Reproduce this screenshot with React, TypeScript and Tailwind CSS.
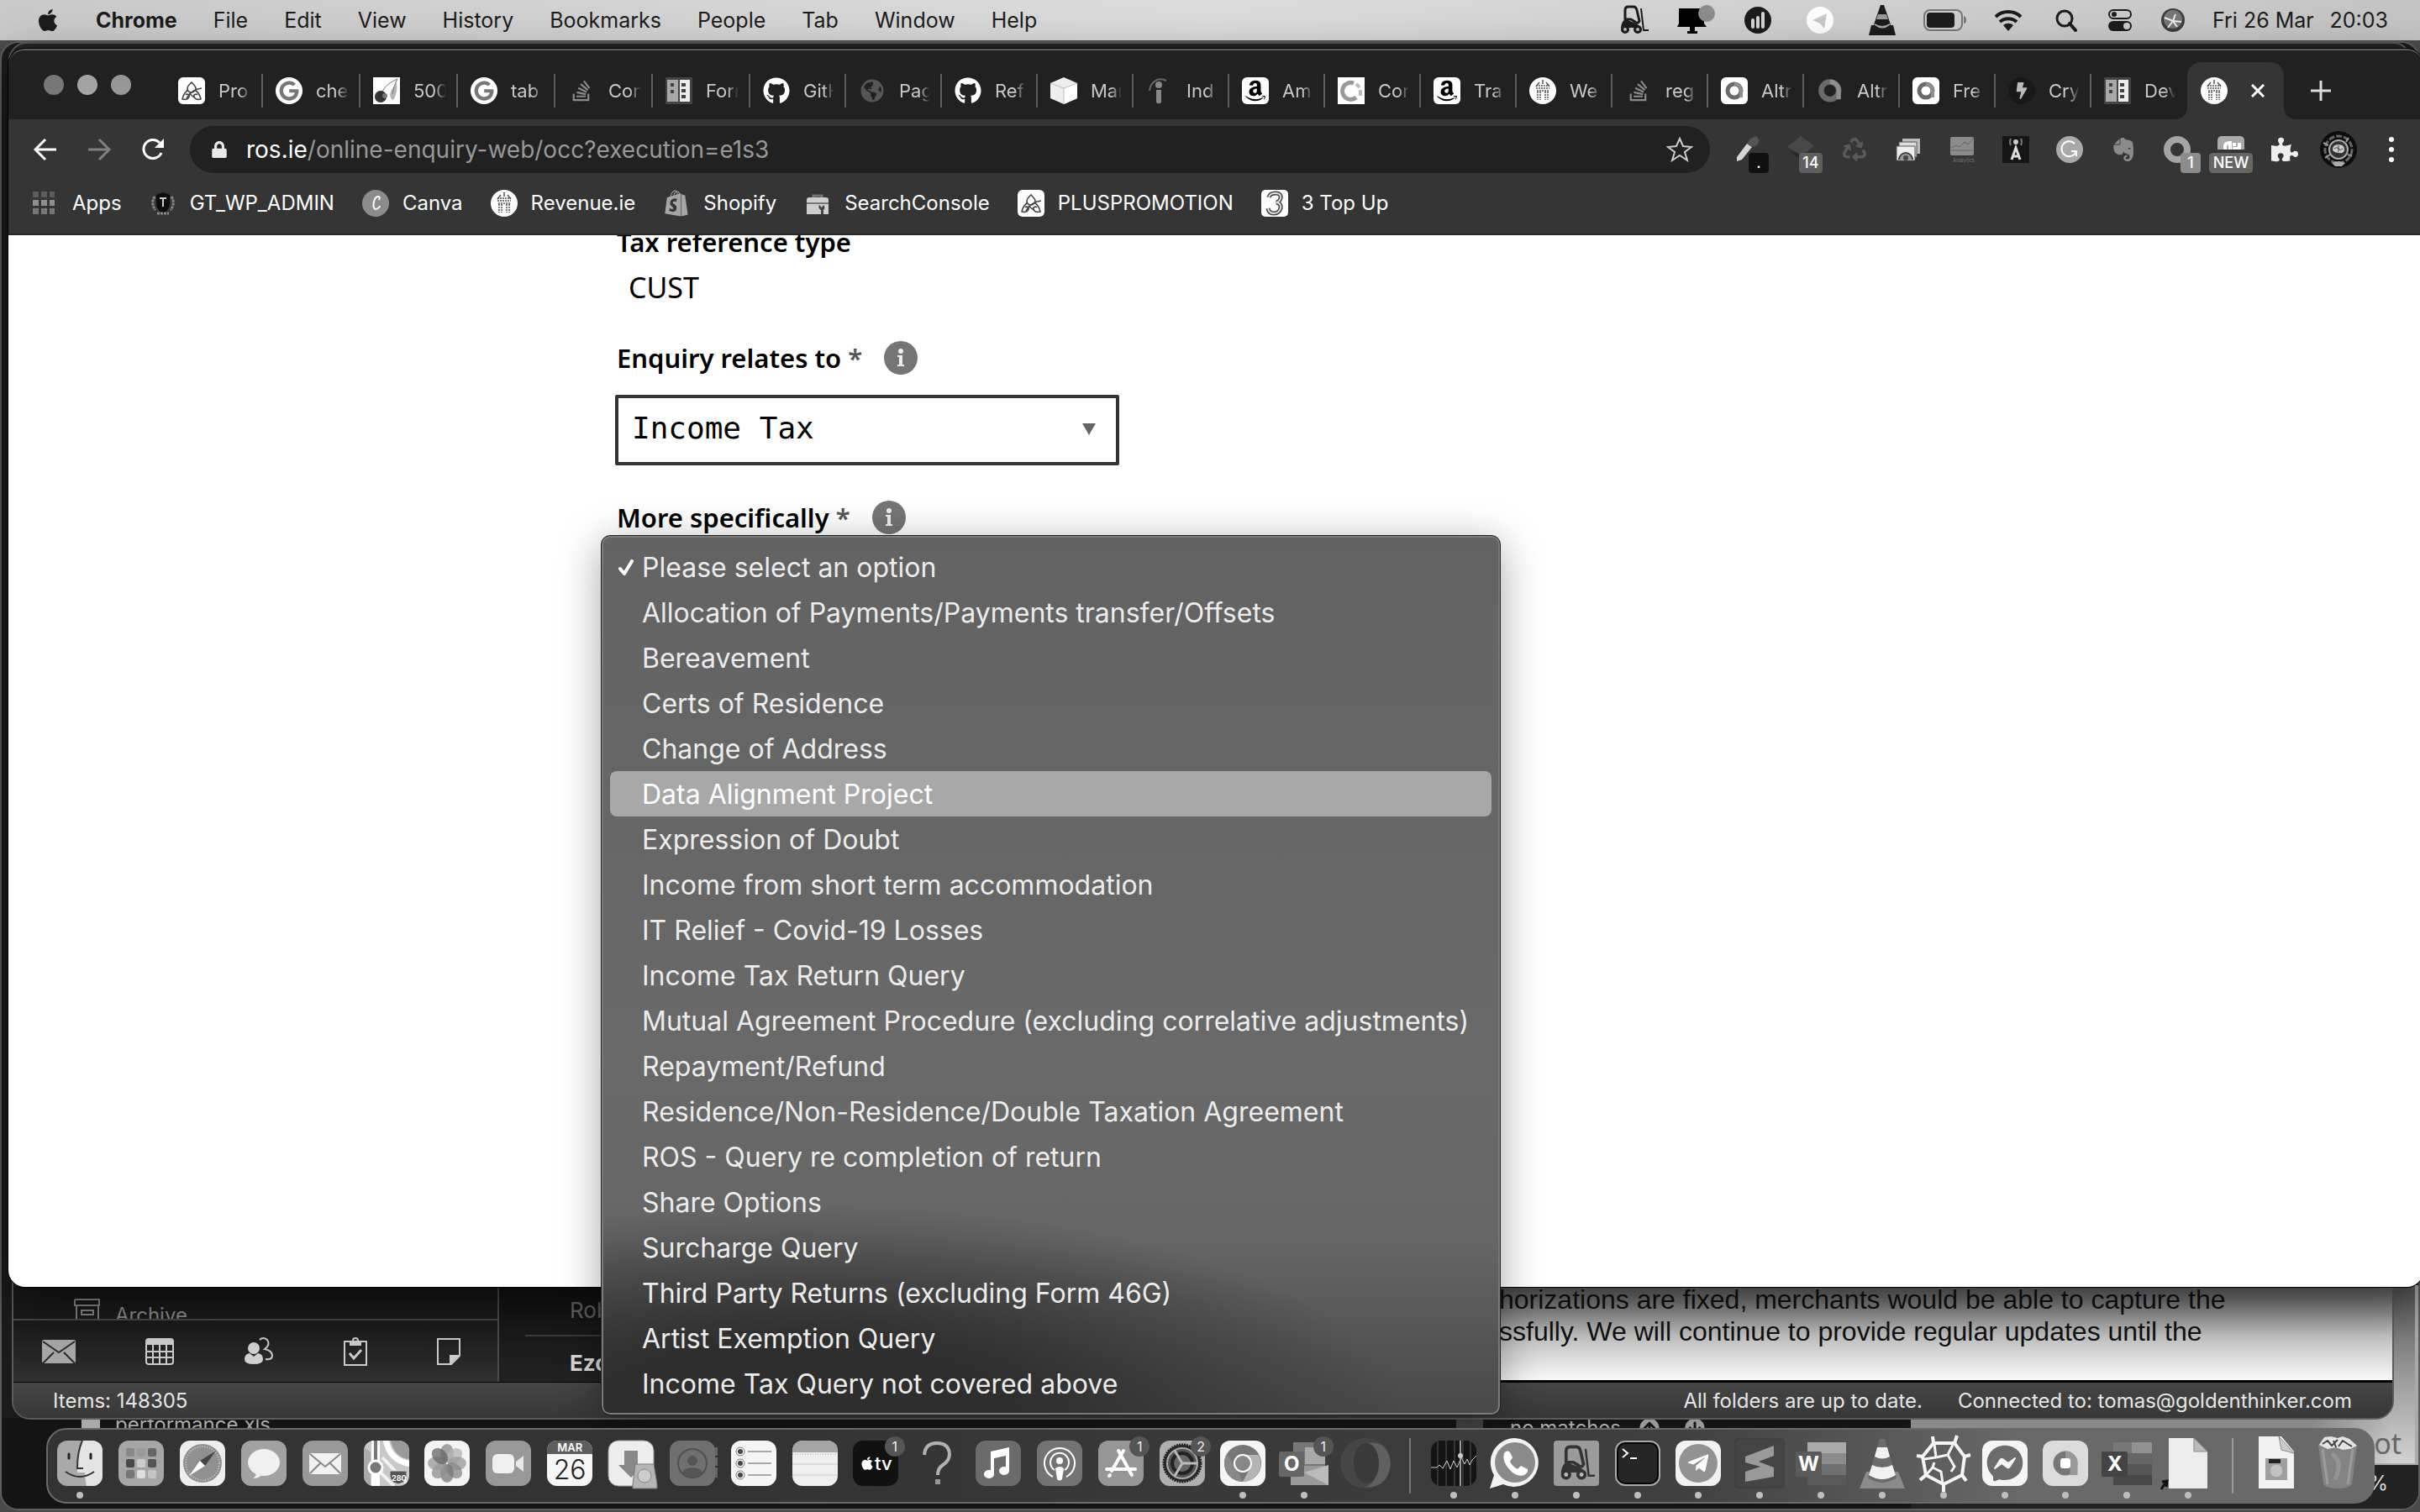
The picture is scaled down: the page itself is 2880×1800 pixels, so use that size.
import React from "react";
import {
  FaAmazon,
  FaApple,
  FaBolt,
  FaEvernote,
  FaFacebookMessenger,
  FaGithub,
  FaGoogle,
  FaPuzzlePiece,
  FaRecycle,
  FaShopify,
  FaStackOverflow,
  FaTelegramPlane,
  FaGlobeAmericas,
  FaLock,
  FaArrowCircleUp,
  FaArrowCircleDown,
} from "react-icons/fa";

type Node = React.ReactNode;

/* ---------- small shared drawings ---------- */

function Svg({ box = "0 0 32 32", className = "size-8", children }: { box?: string; className?: string; children: Node }) {
  return (
    <svg viewBox={box} className={className} fill="none" aria-hidden="true">
      {children}
    </svg>
  );
}

function PlusPromo() {
  return (
    <Svg>
      <rect width="32" height="32" rx="6" fill="#fff" />
      <g stroke="#444" strokeWidth="1.6">
        <path d="M16 6c3 3 5 5 5 7s-2 5-5 5-5-2-5-5 2-4 5-7Z" />
        <path d="M12 15c-3 2-6 6-7 11 4 1 7 0 8-3 1-2-2-4-4-2M20 15c3 2 6 6 7 11-4 1-7 0-8-3-1-2 2-4 4-2" />
        <path d="M10 25c4-7 9-11 18-12M13 19l6 5" />
      </g>
    </Svg>
  );
}

function GoogleIcon() {
  return (
    <span className="flex size-8 items-center justify-center rounded-full bg-white">
      <FaGoogle className="size-6 text-[#777]" />
    </span>
  );
}

function Cherry() {
  return (
    <Svg>
      <rect width="32" height="32" fill="#fff" />
      <path d="M28 6c1 8 0 15-4 21-4-1-5-6-2-12Z" fill="#b5b5b5" />
      <path d="M29 2C22 5 13 10 10 20M29 2c-3 5-5 12-6 18" stroke="#777" />
      <circle cx="9" cy="23" r="7" fill="#333" />
      <circle cx="14" cy="22" r="3" fill="#777" />
    </Svg>
  );
}

function Columns() {
  return (
    <Svg>
      <rect width="32" height="32" fill="#444" />
      <path d="M2 3h13v26H2z" fill="#a8a8a8" />
      <path d="M17 3h12v26H17z" fill="#eee" />
      <path d="M6 7h4v4H6zM6 15h4v4H6zM19 7h5v4h-5zM19 14h5v4h-5zM19 21h5v4h-5z" fill="#444" />
    </Svg>
  );
}

function Cube() {
  return (
    <Svg>
      <path d="M16 0 32 7v18l-16 7L0 25V7Z" fill="#eee" />
      <path d="M16 13 32 7v18l-16 7Z" fill="#fff" />
      <path d="M0 7l16 6 16-6M16 13v19" stroke="#bbb" />
    </Svg>
  );
}

function Indeed() {
  return (
    <Svg>
      <path d="M4 16C5 6 14 -1 24 4" stroke="#666" strokeWidth="2" />
      <circle cx="15" cy="9" r="4" fill="#888" />
      <path d="M12 15h6v14c0 3-6 3-6 0Z" fill="#888" />
    </Svg>
  );
}

function Amazon() {
  return (
    <span className="flex size-8 items-center justify-center rounded-md bg-white">
      <FaAmazon className="size-7 text-black" />
    </span>
  );
}

function RingC() {
  return (
    <Svg>
      <rect width="32" height="32" fill="#fff" />
      <path d="M19 7a10 10 0 1 0 3 17" stroke="#999" strokeWidth="5" />
      <path d="M22 8l4 4M27 15v7" stroke="#bbb" strokeWidth="4" />
    </Svg>
  );
}

function Revenue() {
  return (
    <Svg>
      <circle cx="16" cy="16" r="16" fill="#fff" />
      <g stroke="#555" strokeWidth="1.5">
        <path d="M16 3v5M12 6l-4 5M20 6l4 5" />
        <path d="M8 10h16M8 13h16M9 16h14" strokeDasharray="2 1" />
        <path d="M10 17v10M13 17v10M19 17v10M22 17v10" strokeDasharray="2 1" />
      </g>
    </Svg>
  );
}

function AltRing({ plain }: { plain?: boolean }) {
  return (
    <Svg>
      {!plain && <rect width="32" height="32" rx="6" fill="#fff" />}
      <g transform={plain ? "translate(-5 -5) scale(1.3)" : undefined}>
        <circle cx="16" cy="16" r="8" stroke="#6a6a6a" strokeWidth="5" />
        <path d="M16 8a8 8 0 0 1 8 8v8" stroke="#8e8e8e" strokeWidth="4" />
        <rect x="12" y="12" width="8" height="8" rx="2" fill={plain ? "#212121" : "#fff"} />
      </g>
    </Svg>
  );
}

function StackIcon() {
  return <FaStackOverflow className="size-7 text-[#8a8a8a]" />;
}
function GitIcon() {
  return <FaGithub className="size-8 text-white" />;
}

/* ---------- menu bar ---------- */

const menus = ["File", "Edit", "View", "History", "Bookmarks", "People", "Tab", "Window", "Help"];

function Forklift({ className = "size-9", color = "#1c1c1c" }: { className?: string; color?: string }) {
  return (
    <Svg box="0 0 36 36" className={className}>
      <path d="M8 17V6q0-4 4-4h6q3 0 4 4l3 13q-2 4-5 1l-5-3Z" stroke={color} strokeWidth="3" strokeLinejoin="round" />
      <path d="M27 4l3 26h6" stroke={color} strokeWidth="2" />
      <path d="M3 27q1-9 6-10l7 3q8 2 10 7Z" fill={color} />
      <circle cx="8" cy="29" r="5" fill={color} />
      <circle cx="23" cy="29" r="5" fill={color} />
      <circle cx="8" cy="29" r="2" fill="#bbb" />
      <circle cx="23" cy="29" r="2" fill="#bbb" />
    </Svg>
  );
}

function MenuBar() {
  return (
    <header className="flex h-12 shrink-0 items-center bg-linear-to-r from-[#c9c9c9] via-[#dcdcdc] to-[#c4c4c4] pr-[38px] pl-[42px] text-[25px] leading-12 text-[#1c1c1c]">
      <button aria-label="Apple menu" className="mr-[42px]">
        <FaApple className="size-[30px]" />
      </button>
      <nav className="flex gap-[43px]">
        <button className="font-bold">Chrome</button>
        {menus.map((m) => (
          <button key={m}>{m}</button>
        ))}
      </nav>
      <div className="ml-auto flex items-center">
        <span className="flex w-[74px] justify-center">
          <Forklift />
        </span>
        <span className="flex w-[74px] justify-center">
          <Svg box="0 0 46 36" className="h-9 w-[46px]">
            <path d="M3 4h26q3 0 4 3v15l3 4H1l2-4Z" fill="#000" />
            <path d="M16 26h6v5h3v3H13v-3h3z" fill="#000" />
            <circle cx="36" cy="10" r="10" fill="#8d8d8d" />
          </Svg>
        </span>
        <span className="flex w-[74px] justify-center">
          <Svg>
            <circle cx="16" cy="16" r="16" fill="#1c1c1c" />
            <path d="M10 16v8M16 13v11M22 8v16" stroke="#d5d5d5" strokeWidth="4" strokeLinecap="round" />
          </Svg>
        </span>
        <span className="flex w-[74px] justify-center">
          <Svg>
            <circle cx="16" cy="16" r="16" fill="#fff" />
            <path d="M7 16 24 8l-3 18-5-6Z" fill="#c9c9c9" />
          </Svg>
        </span>
        <span className="flex w-[74px] justify-center">
          <Svg box="0 0 32 38" className="h-[38px] w-8">
            <path d="M14 1h4l9 26H5Z" fill="#1c1c1c" />
            <path d="M11 12h10l2 6H9Z" fill="#999" />
            <path d="M7 23q9 6 18 0l1 3q-10 6-20 0Z" fill="#aaa" />
            <path d="M3 25h4q9 7 18 0h4l3 12H0Z" fill="#1c1c1c" />
          </Svg>
        </span>
        <span className="flex w-[76px] justify-center">
          <Svg box="0 0 52 26" className="h-[26px] w-[52px]">
            <rect x="1" y="1" width="45" height="24" rx="7" stroke="#777" strokeWidth="2" />
            <rect x="4" y="4" width="33" height="18" rx="4" fill="#1c1c1c" />
            <path d="M48 8q3 1 3 5t-3 4Z" fill="#777" />
          </Svg>
        </span>
        <span className="flex w-[74px] justify-center">
          <Svg box="0 0 34 26" className="h-[26px] w-[34px]">
            <path d="M2 9a22 22 0 0 1 30 0M7 15a15 15 0 0 1 20 0" stroke="#1c1c1c" strokeWidth="4" />
            <path d="M11 19a9 9 0 0 1 12 0l-6 7Z" fill="#1c1c1c" />
          </Svg>
        </span>
        <span className="flex w-16 justify-center">
          <Svg box="0 0 28 28" className="size-7">
            <circle cx="12" cy="12" r="9" stroke="#1c1c1c" strokeWidth="3" />
            <path d="M18 18l7 8" stroke="#1c1c1c" strokeWidth="4" strokeLinecap="round" />
          </Svg>
        </span>
        <span className="flex w-16 justify-center">
          <Svg box="0 0 28 28" className="size-7">
            <rect x="1" y="2" width="26" height="10" rx="5" stroke="#1c1c1c" strokeWidth="2" />
            <circle cx="7" cy="7" r="3" fill="#1c1c1c" />
            <rect y="15" width="28" height="12" rx="6" fill="#1c1c1c" />
            <circle cx="22" cy="21" r="4" fill="#ccc" />
          </Svg>
        </span>
        <span className="mr-4 flex w-[62px] justify-center">
          <Svg box="0 0 28 28" className="size-7">
            <circle cx="14" cy="14" r="14" fill="#3d3d3d" />
            <circle cx="14" cy="13" r="11" fill="#777" />
            <path d="M4 11l10 4 3-8M14 15l10 1M14 15l-6 8M14 15l5 7" stroke="#eee" strokeWidth="2" />
          </Svg>
        </span>
        <button className="flex w-[209px] justify-between">
          <span>Fri 26 Mar</span>
          <span>20:03</span>
        </button>
      </div>
    </header>
  );
}

/* ---------- browser ---------- */

const tabs: { title: string; icon: Node; wide?: boolean }[] = [
  { title: "Pro", icon: <PlusPromo />, wide: true },
  { title: "che", icon: <GoogleIcon />, wide: true },
  { title: "500", icon: <Cherry />, wide: true },
  { title: "tab", icon: <GoogleIcon />, wide: true },
  { title: "Con", icon: <StackIcon />, wide: true },
  { title: "Forn", icon: <Columns />, wide: true },
  { title: "GitH", icon: <GitIcon /> },
  { title: "Pag", icon: <FaGlobeAmericas className="size-7 text-[#555]" /> },
  { title: "Ref", icon: <GitIcon /> },
  { title: "Mar", icon: <Cube /> },
  { title: "Ind", icon: <Indeed /> },
  { title: "Am", icon: <Amazon /> },
  { title: "Cor", icon: <RingC /> },
  { title: "Tra", icon: <Amazon /> },
  { title: "We", icon: <Revenue /> },
  { title: "reg", icon: <StackIcon /> },
  { title: "Altr", icon: <AltRing /> },
  { title: "Altr", icon: <AltRing plain /> },
  { title: "Fre", icon: <AltRing /> },
  {
    title: "Cry",
    icon: (
      <span className="flex size-8 items-center justify-center rounded-full bg-[#191919]">
        <FaBolt className="size-5 text-[#bbb]" />
      </span>
    ),
  },
  { title: "Dev", icon: <Columns /> },
];

function TabStrip() {
  return (
    <div className="flex h-[82px] shrink-0 items-end bg-[#212121]">
      <div className="flex w-[187px] shrink-0 gap-4 self-center pl-[42px]">
        <button aria-label="Close window" className="size-6 rounded-full bg-[#777]" />
        <button aria-label="Minimise window" className="size-6 rounded-full bg-[#a3a3a3]" />
        <button aria-label="Zoom window" className="size-6 rounded-full bg-[#979797]" />
      </div>
      {tabs.map((t, i) => (
        <button key={i} className={`flex h-[68px] shrink-0 items-center ${t.wide ? "w-[116px]" : "w-[114px]"}`}>
          <span className="ml-[15px] flex size-8 shrink-0 items-center justify-center">{t.icon}</span>
          <span className="ml-4 flex-1 overflow-hidden text-left text-[22px] text-[#c8c8c8] [mask-image:linear-gradient(to_right,black_65%,transparent)]">
            {t.title}
          </span>
          <span className={`ml-3 h-10 w-0.5 ${i === tabs.length - 1 ? "" : "bg-[#5c5c5c]"}`} />
        </button>
      ))}
      <div className="relative flex h-[68px] w-[115px] shrink-0 items-center rounded-t-2xl bg-[#353535]">
        <svg viewBox="0 0 16 16" className="absolute bottom-0 -left-4 size-4" aria-hidden="true">
          <path d="M16 0v16H0Q16 16 16 0Z" fill="#353535" />
        </svg>
        <svg viewBox="0 0 16 16" className="absolute -right-4 bottom-0 size-4" aria-hidden="true">
          <path d="M0 0v16h16Q0 16 0 0Z" fill="#353535" />
        </svg>
        <span className="ml-4">
          <Revenue />
        </span>
        <button aria-label="Close tab" className="ml-7">
          <Svg box="0 0 16 16" className="size-4">
            <path d="M1 1l14 14M15 1 1 15" stroke="#fff" strokeWidth="3" />
          </Svg>
        </button>
      </div>
      <button aria-label="New tab" className="flex h-[68px] items-center pl-8">
        <Svg box="0 0 24 24" className="size-6">
          <path d="M12 0v24M0 12h24" stroke="#ddd" strokeWidth="3" />
        </Svg>
      </button>
    </div>
  );
}

function Badge({ children, className }: { children: Node; className: string }) {
  return (
    <span className={`absolute top-8 flex h-6 items-center justify-center rounded text-lg font-medium text-white ${className}`}>
      {children}
    </span>
  );
}

const extensions: Node[] = [
  <>
    <Svg>
      <path d="M4 25 16 9l6 4L10 28l-6 2Z" fill="#d5d5d5" />
      <path d="M16 9l4-6 7-3 4 5-3 6-6 2Z" fill="#555" />
    </Svg>
    <Badge className="left-[34px] w-6 bg-[#111]">.</Badge>
  </>,
  <>
    <Svg>
      <path d="M16 0 32 12 18 23 0 13Z" fill="#484848" />
      <path d="M2 17l16 12v-6Z" fill="#262626" />
    </Svg>
    <Badge className="left-[30px] w-7 bg-[#5f5f5f]">14</Badge>
  </>,
  <FaRecycle className="size-7 text-[#595959]" />,
  <Svg>
    <path d="M9 3h21v18H9z" fill="#bbb" />
    <path d="M5 7h21v18H5z" fill="#ddd" stroke="#555" />
    <path d="M2 12h22v17H2z" fill="#eee" stroke="#555" />
    <path d="M5 28a8 8 0 0 1 16 0" fill="#999" stroke="#444" strokeWidth="2" />
    <circle cx="13" cy="26" r="3" fill="#444" />
  </Svg>,
  <Svg>
    <rect x="2" y="1" width="28" height="22" rx="2" fill="#8b8b8b" />
    <path d="M3 14l6-3 4 2 6-6 4 3 6-7M3 17h26" stroke="#666" />
    <text x="5" y="31" fontSize="6" fill="#777">
      Analytics
    </text>
  </Svg>,
  <Svg>
    <rect width="32" height="32" fill="#161616" />
    <path d="M11 28l5-14 5 14M13 24h6" stroke="#ddd" strokeWidth="3" />
    <circle cx="16" cy="7" r="3" fill="#ccc" />
    <path d="M10 3q-2 4 0 8M22 3q2 4 0 8" stroke="#777" strokeWidth="2" />
  </Svg>,
  <Svg>
    <circle cx="16" cy="16" r="16" fill="#a9a9a9" />
    <path d="M22 9a9 9 0 1 0 2 9h-6M24 18v6" stroke="#fff" strokeWidth="2" />
  </Svg>,
  <FaEvernote className="size-8 text-[#8a8a8a]" />,
  <>
    <Svg>
      <circle cx="16" cy="16" r="12" stroke="#a5a5a5" strokeWidth="8" />
    </Svg>
    <Badge className="left-9 w-6 bg-[#8c8c8c]">1</Badge>
  </>,
  <>
    <Svg>
      <rect width="32" height="32" rx="5" fill="#aaa" />
      <path d="M9 18v-6q0-4 6-4v10M20 8v4M20 18v-3h6V8" stroke="#fff" strokeWidth="4" />
    </Svg>
    <Badge className="left-[6px] w-[52px] bg-[#666] outline-4 outline-[#353535]">NEW</Badge>
  </>,
  <FaPuzzlePiece className="size-8 text-[#eee]" />,
];

function Toolbar() {
  return (
    <div className="flex h-[72px] shrink-0 items-center bg-[#353535] pr-[31px] pl-7">
      <button aria-label="Back" className="mr-8 p-0.5">
        <Svg box="0 0 28 28" className="size-7">
          <path d="M27 14H3M14 2 2 14l12 12" stroke="#fff" strokeWidth="3" />
        </Svg>
      </button>
      <button aria-label="Forward" className="mr-8 p-0.5">
        <Svg box="0 0 28 28" className="size-7">
          <path d="M1 14h24M14 2l12 12-12 12" stroke="#808080" strokeWidth="3" />
        </Svg>
      </button>
      <button aria-label="Reload" className="mr-7 p-0.5">
        <Svg box="0 0 28 28" className="size-7">
          <path d="M24 18a11 11 0 1 1-2-12" stroke="#fff" strokeWidth="3" />
          <path d="M27 1v11H16Z" fill="#fff" />
        </Svg>
      </button>
      <div className="flex h-14 flex-1 items-center rounded-full bg-[#212121] pr-5 pl-[25px] text-[28px]">
        <FaLock className="size-5 text-[#e8e8e8]" />
        <button className="ml-[22px] flex-1 text-left text-[#989898]">
          <span className="text-white">ros.ie</span>/online-enquiry-web/occ?execution=e1s3
        </button>
        <button aria-label="Bookmark this page">
          <Svg>
            <path d="m16 3 4 9 10 1-8 6 3 10-9-6-9 6 3-10-8-6 10-1Z" stroke="#ccc" strokeWidth="2" />
          </Svg>
        </button>
      </div>
      <div className="ml-3 flex">
        {extensions.map((e, i) => (
          <button key={i} aria-label={`Extension ${i + 1}`} className="relative flex h-14 w-16 items-center justify-center">
            {e}
          </button>
        ))}
      </div>
      <button aria-label="Profile" className="ml-[10px]">
        <Svg box="0 0 44 44" className="size-11">
          <circle cx="22" cy="22" r="22" fill="#0d0d0d" />
          <circle cx="22" cy="22" r="16" stroke="#666" strokeWidth="3" strokeDasharray="7 2" />
          <circle cx="22" cy="22" r="11" fill="#333" stroke="#aaa" strokeWidth="2" />
          <path d="M15 22q0-6 7-6t7 6q0 5-7 4t-7-4" fill="#ccc" />
          <path d="M17 21q3-3 5 0t5 0M22 17v8" stroke="#444" />
          <path d="M4 14l6 3M34 8l-3 5M6 32l6-4M38 30l-5-2" stroke="#999" strokeWidth="2" />
          <path d="M14 38q8-4 16 0l-4 4h-8Z" fill="#aaa" />
        </Svg>
      </button>
      <button aria-label="Menu" className="ml-[34px] flex flex-col items-center gap-[6px] px-1">
        <span className="size-1.5 rounded-full bg-white" />
        <span className="size-1.5 rounded-full bg-white" />
        <span className="size-1.5 rounded-full bg-white" />
      </button>
    </div>
  );
}

const bookmarks: { label: string; icon: Node }[] = [
  {
    label: "GT_WP_ADMIN",
    icon: (
      <Svg>
        <path d="M16 3l8 3v10q0 8-8 12-8-4-8-12V6Z" fill="#0c0c0c" />
        <path d="M6 8q-5 8 1 16M26 8q5 8-1 16M9 28h14" stroke="#8a8a8a" strokeWidth="3" strokeDasharray="3 1" />
        <path d="M12 10h8M16 10v10" stroke="#ccc" strokeWidth="2" />
      </Svg>
    ),
  },
  {
    label: "Canva",
    icon: (
      <Svg>
        <circle cx="16" cy="16" r="16" fill="#8c8c8c" />
        <path d="M20 12q2-4-1-4c-5 0-8 14-3 15 3 0 5-3 5-4" stroke="#fff" strokeWidth="2" />
      </Svg>
    ),
  },
  { label: "Revenue.ie", icon: <Revenue /> },
  { label: "Shopify", icon: <FaShopify className="size-8 text-[#a5a5a5]" /> },
  {
    label: "SearchConsole",
    icon: (
      <Svg>
        <path d="M11 9V7h10v2" stroke="#777" strokeWidth="3" />
        <path d="M3 12q0-3 3-3h20q3 0 3 3v17H3Z" fill="#cfcfcf" />
        <path d="M3 16h26" stroke="#777" strokeWidth="2" />
        <path d="M20 29v-5a4 4 0 0 1-2-6l3 3 2-3a4 4 0 0 1 0 6v5Z" fill="#444" />
      </Svg>
    ),
  },
  { label: "PLUSPROMOTION", icon: <PlusPromo /> },
  {
    label: "3 Top Up",
    icon: (
      <Svg>
        <rect width="32" height="32" rx="5" fill="#fff" />
        <path d="M9 9q1-5 8-5t6 6q-1 4-5 5 6 1 5 7-2 6-8 6t-7-6" stroke="#444" strokeWidth="5" />
        <path d="M9 9q1-5 8-5t6 6q-1 4-5 5 6 1 5 7-2 6-8 6t-7-6" stroke="#ddd" strokeWidth="2" />
      </Svg>
    ),
  },
];

function BookmarkBar() {
  return (
    <nav className="flex h-[66px] shrink-0 items-start gap-[33px] border-b-2 border-[#262626] bg-[#353535] pt-3 pl-7 text-[24px] leading-8 text-white">
      <a href="#apps" className="flex items-center gap-5">
        <Svg box="0 0 26 28" className="h-7 w-[28px]">
          <path d="M0 0h7v7H0zM10 0h7v7h-7zM20 0h6v7h-6z" fill="#5c5c5c" />
          <path d="M0 10h7v7H0zM10 10h7v7h-7zM20 10h6v7h-6z" fill="#8e8e8e" />
          <path d="M0 20h7v7H0zM10 20h7v7h-7zM20 20h6v7h-6z" fill="#777" />
        </Svg>
        Apps
      </a>
      {bookmarks.map((b) => (
        <a key={b.label} href={`#${b.label}`} className="flex items-center gap-4">
          {b.icon}
          {b.label}
        </a>
      ))}
    </nav>
  );
}

function Info() {
  return (
    <button aria-label="Help" className="flex size-10 items-center justify-center rounded-full bg-[#757575]">
      <svg viewBox="0 0 10 22" className="h-[22px] w-2.5" fill="#eee" aria-hidden="true">
        <circle cx="5" cy="3" r="3" />
        <path d="M1 8h6v11h2v2H1v-2h2v-9H1Z" />
      </svg>
    </button>
  );
}

function EnquiryForm() {
  return (
    <form className="min-h-0 flex-1 overflow-hidden bg-white pl-[722px] font-['Noto_Sans',sans-serif] text-black">
      <div className="-mt-4 ml-0.5 text-[31px] leading-12 font-semibold">Tax reference type</div>
      <div className="mt-1.5 ml-4 text-[34px] leading-12">CUST</div>
      <div className="mt-9 ml-0.5 flex items-center gap-[26px]">
        <label htmlFor="relates" className="text-[31px] leading-12 font-semibold">
          Enquiry relates to <span className="text-[#555]">*</span>
        </label>
        <Info />
      </div>
      <div className="relative mt-[20px] w-[600px]">
        <select
          id="relates"
          className="h-[84px] w-full appearance-none rounded-xs border-4 border-[#333] bg-white pb-1 pl-4 font-['DejaVu_Sans_Mono',monospace] text-4xl"
        >
          <option>Income Tax</option>
        </select>
        <svg viewBox="0 0 16 14" className="pointer-events-none absolute top-[34px] right-7 h-3.5 w-4" aria-hidden="true">
          <path d="M0 0h16L8 14Z" fill="#666" />
        </svg>
      </div>
      <div className="mt-[38px] ml-0.5 flex items-center gap-[26px]">
        <span id="specific" className="text-[31px] leading-12 font-semibold">
          More specifically <span className="text-[#555]">*</span>
        </span>
        <Info />
      </div>
    </form>
  );
}

const options = [
  "Please select an option",
  "Allocation of Payments/Payments transfer/Offsets",
  "Bereavement",
  "Certs of Residence",
  "Change of Address",
  "Data Alignment Project",
  "Expression of Doubt",
  "Income from short term accommodation",
  "IT Relief - Covid-19 Losses",
  "Income Tax Return Query",
  "Mutual Agreement Procedure (excluding correlative adjustments)",
  "Repayment/Refund",
  "Residence/Non-Residence/Double Taxation Agreement",
  "ROS - Query re completion of return",
  "Share Options",
  "Surcharge Query",
  "Third Party Returns (excluding Form 46G)",
  "Artist Exemption Query",
  "Income Tax Query not covered above",
];

function OptionMenu() {
  return (
    <ul
      role="listbox"
      aria-labelledby="specific"
      className="absolute top-[637px] left-[715px] w-[1071px] rounded-[11px] border border-[#222] bg-[radial-gradient(ellipse_720px_250px_at_22%_100%,#2e2e2e_35%,transparent_100%),linear-gradient(to_bottom,#636363,#696969_60%,#666_80%,#484848)] px-[10px] py-2.5 text-[32px] leading-[54px] text-[#ececec] shadow-[inset_0_0_0_2px_#7b7b7b,0_10px_50px_rgba(0,0,0,0.35)]"
    >
      {options.map((o, i) => (
        <li
          key={o}
          role="option"
          aria-selected={i === 0}
          className={`flex h-[54px] items-center rounded-lg pt-0.5 whitespace-nowrap ${i === 5 ? "bg-[#a8a8a8] text-white" : ""}`}
        >
          <span className="flex w-[38px] shrink-0 justify-center">
            {i === 0 && (
              <Svg box="0 0 20 20" className="size-5">
                <path d="M3 11l5 6L17 2" stroke="#fff" strokeWidth="4" strokeLinecap="round" strokeLinejoin="round" />
              </Svg>
            )}
          </span>
          {o}
        </li>
      ))}
    </ul>
  );
}

/* ---------- mail window behind the browser ---------- */

function MailWindow() {
  return (
    <section className="absolute right-[31px] bottom-[110px] left-[14px] flex h-[180px] flex-col overflow-hidden rounded-b-[22px] border-2 border-[#5c5c5c] bg-[#3d3d3d]">
      <div className="flex min-h-0 flex-1">
        <div className="flex w-[578px] shrink-0 flex-col border-r-2 border-[#4a4a4a] bg-linear-to-b from-[#161616] via-[#1c1c1c] to-[#303030]">
          <div className="flex h-[60px] items-end overflow-hidden border-b-2 border-[#4a4a4a] pl-[72px] text-[#8f8f8f]">
            <Svg box="0 0 32 24" className="h-6 w-8">
              <path d="M2 1h28v7H1V2ZM3 8v16M29 8v16M9 14h14v5H9z" stroke="#8a8a8a" strokeWidth="2" />
            </Svg>
            <span className="-mb-4 ml-[17px] text-[24px] leading-10">Archive</span>
          </div>
          <div className="flex flex-1 items-center justify-between pr-11 pl-[34px]">
            <Svg box="0 0 40 28" className="h-7 w-10">
              <rect width="40" height="28" rx="2" fill="#a8a8a8" />
              <path d="M1 2l19 13L39 2M1 28l13-13M39 28 26 15" stroke="#2c2c2c" strokeWidth="2" />
            </Svg>
            <Svg box="0 0 34 32" className="h-8 w-[34px]">
              <rect x="1" y="1" width="32" height="30" rx="3" stroke="#ccc" strokeWidth="2" />
              <path d="M1 2h32v6H1z" fill="#ccc" />
              <path d="M1 16h32M1 23h32M9 8v23M17 8v23M25 8v23" stroke="#ccc" strokeWidth="2" />
            </Svg>
            <Svg box="0 0 36 36" className="size-9">
              <circle cx="12" cy="14" r="7" fill="#d2d2d2" />
              <path d="M1 27q0-6 6-7l5 4 5-4q6 1 6 7 0 6-11 6T1 27Z" fill="#d2d2d2" />
              <path d="M19 4q4-4 9 0 4 6-3 11 9 2 9 8 0 5-8 4" stroke="#ccc" strokeWidth="2" />
            </Svg>
            <Svg box="0 0 28 34" className="h-[34px] w-7">
              <rect x="1" y="5" width="26" height="28" stroke="#ccc" strokeWidth="2" />
              <path d="M7 5h14v5H7z" fill="#ccc" />
              <circle cx="14" cy="4" r="3" stroke="#ccc" strokeWidth="2" />
              <path d="M7 19l5 6 9-10" stroke="#ccc" strokeWidth="3" />
            </Svg>
            <Svg box="0 0 28 32" className="h-8 w-7">
              <path d="M1 1h26v20L17 31H1Z" stroke="#ccc" strokeWidth="2" />
              <path d="M15 20h12L15 32Z" fill="#ccc" />
            </Svg>
          </div>
        </div>
        <div className="w-[1190px] shrink-0 bg-linear-to-b from-[#101010] to-[#222] pl-[31px] text-[26px]">
          <div className="h-[79px] border-b-2 border-[#3c3c3c] pt-[30px] pl-[53px] leading-9 text-[#6f6f6f]">Rob</div>
          <div className="pt-[14px] pl-[53px] leading-9 font-bold text-[#d8d8d8]">Ezo</div>
        </div>
        <div className="flex-1 overflow-hidden border-b-2 border-black bg-linear-to-b from-[#666] from-15% via-[#c4c4c4] via-60% to-[#f8f8f8] pt-4 font-['Liberation_Sans',sans-serif] text-[32px] leading-[38px] whitespace-nowrap text-[#111]">
          <p>horizations are fixed, merchants would be able to capture the</p>
          <p>ssfully. We will continue to provide regular updates until the</p>
        </div>
      </div>
      <footer className="flex h-[43px] shrink-0 items-center gap-[42px] border-t border-black bg-linear-to-b from-[#464646] to-[#373737] pt-0.5 pr-12 pl-[47px] text-[24px] text-[#e6e6e6]">
        <span className="mr-auto">Items: 148305</span>
        <span>All folders are up to date.</span>
        <span>Connected to: tomas@goldenthinker.com</span>
      </footer>
    </section>
  );
}

/* ---------- dock ---------- */

function Tile({ className, children }: { className: string; children?: Node }) {
  return <span className={`relative flex size-[54px] items-center justify-center overflow-hidden rounded-xl ${className}`}>{children}</span>;
}

function Art({ children }: { children: Node }) {
  return (
    <svg viewBox="0 0 54 54" className="size-[54px] shrink-0 overflow-visible" fill="none" aria-hidden="true">
      {children}
    </svg>
  );
}

function VlcDock() {
  return (
    <Art>
      <path d="M8 37h38l8 20H0Z" fill="#8a8a8a" />
      <path d="M24-2h6l14 46q-17 12-34 0Z" fill="#6c6c6c" />
      <path d="M21 8h12l3 11q-9 5-18 0ZM15 29q12 6 24 0l4 12q-16 10-32 0Z" fill="#f2f2f2" />
    </Art>
  );
}

function OfficeIcon({ letter, dark }: { letter: string; dark?: boolean }) {
  return (
    <span className="relative flex h-[54px] w-[60px]">
      <svg viewBox="0 0 60 54" className="h-[54px] w-[60px]" aria-hidden="true">
        <path d="M14 2h46v13H14z" fill={dark ? "#777" : "#aaa"} />
        <path d="M14 15h46v13H14z" fill={dark ? "#666" : "#8c8c8c"} />
        <path d="M14 28h46v13H14z" fill={dark ? "#565656" : "#707070"} />
        <path d="M14 41h46v12H14z" fill={dark ? "#484848" : "#595959"} />
        {dark && <path d="M36 2h24v13H36z" fill="#929292" />}
        <rect y="13" width="31" height="30" rx="2" fill={dark ? "#444" : "#5a5a5a"} />
      </svg>
      <span className="absolute top-3 left-0 w-[31px] text-center text-2xl leading-8 font-bold text-white">{letter}</span>
    </span>
  );
}

type DockItem = { name: string; art: Node; dot?: boolean; badge?: string };

const launchpadShades = ["#888", "#999", "#666", "#4a4a4a", "#ccc", "#555", "#777", "#ddd", "#c4c4c4"];
const petalShades = ["#8a8a8a", "#b5b5b5", "#999", "#888", "#777", "#8e8e8e", "#9a9a9a", "#666"];

const dockMain: DockItem[] = [
  {
    name: "Finder",
    dot: true,
    art: (
      <Tile className="bg-[#a9a9a9]">
        <Art>
          <path d="M30 0h24v54H35q-2-9-2-16h-9q0-22 6-38Z" fill="#e4e4e4" />
          <path d="M14 16v5M40 16v5" stroke="#222" strokeWidth="3" strokeLinecap="round" />
          <path d="M10 37q17 12 34 0M31 33h-7q0-20 6-33" stroke="#333" strokeWidth="2" />
        </Art>
      </Tile>
    ),
  },
  {
    name: "Launchpad",
    art: (
      <Tile className="bg-[#a6a6a6]">
        <Art>
          {launchpadShades.map((fill, i) => (
            <rect key={i} x={9 + (i % 3) * 13} y={9 + Math.floor(i / 3) * 13} width="10" height="10" rx="2" fill={fill} />
          ))}
        </Art>
      </Tile>
    ),
  },
  {
    name: "Safari",
    art: (
      <Tile className="bg-[#eee]">
        <Art>
          <circle cx="27" cy="27" r="23" fill="#909090" />
          <circle cx="27" cy="27" r="20" stroke="#ccc" strokeWidth="2" strokeDasharray="1 2" />
          <path d="M43 12 30 30l-6-6Z" fill="#444" />
          <path d="M11 42l13-18 6 6Z" fill="#fff" />
        </Art>
      </Tile>
    ),
  },
  {
    name: "Messages",
    art: (
      <Tile className="bg-[#a2a2a2]">
        <Art>
          <ellipse cx="27" cy="26" rx="19" ry="16" fill="#f0f0f0" />
          <path d="M18 38q0 5-4 7 8 0 11-5Z" fill="#f0f0f0" />
        </Art>
      </Tile>
    ),
  },
  {
    name: "Mail",
    art: (
      <Tile className="bg-[#999]">
        <Art>
          <rect x="8" y="15" width="38" height="25" rx="3" fill="#f1f1f1" />
          <path d="M9 16l18 15 18-15M9 39l13-13M45 39 32 26" stroke="#888" strokeWidth="2" />
        </Art>
      </Tile>
    ),
  },
  {
    name: "Maps",
    art: (
      <Tile className="bg-[#c8c8c8]">
        <Art>
          <path d="M22 20l32 34M20 38l16 16" stroke="#f2f2f2" strokeWidth="4" />
          <path d="M26-2q4 26 30 30" stroke="#fff" strokeWidth="7" />
          <path d="M32 0q4 20 22 22V0Z" fill="#999" />
          <path d="M0 8l8 6v40H0Z" fill="#aaa" />
          <path d="M14 0v54" stroke="#fff" strokeWidth="10" />
          <path d="M14 0v28" stroke="#777" strokeWidth="4" />
          <circle cx="14" cy="32" r="8" fill="#777" stroke="#fff" strokeWidth="3" />
          <path d="M31 36h20q2 14-10 16-12-2-10-16Z" fill="#555" stroke="#ddd" />
          <text x="33" y="48" fontSize="9" fontWeight="700" fill="#fff">
            280
          </text>
        </Art>
      </Tile>
    ),
  },
  {
    name: "Photos",
    art: (
      <Tile className="bg-[#f4f4f4]">
        <Art>
          {petalShades.map((fill, i) => (
            <ellipse key={i} cx="27" cy="15" rx="8" ry="11" transform={`rotate(${i * 45} 27 27)`} opacity="0.75" fill={fill} />
          ))}
        </Art>
      </Tile>
    ),
  },
  {
    name: "FaceTime",
    art: (
      <Tile className="bg-[#989898]">
        <Art>
          <rect x="8" y="16" width="26" height="23" rx="6" fill="#f0f0f0" />
          <path d="M36 25l9-7v19l-9-7Z" fill="#e8e8e8" />
        </Art>
      </Tile>
    ),
  },
  {
    name: "Calendar",
    art: (
      <Tile className="flex-col bg-[#f6f6f6]">
        <span className="flex h-4 w-full shrink-0 items-center justify-center bg-[#5e5e5e] text-[13px] leading-4 font-semibold text-white">MAR</span>
        <span className="flex flex-1 items-center text-[32px] leading-8 font-light text-[#222]">26</span>
      </Tile>
    ),
  },
  {
    name: "Install macOS",
    art: (
      <Art>
        <rect width="54" height="54" rx="12" fill="#eee" stroke="#999" />
        <path d="M19 12h16v17h8L27 44 12 29h7Z" fill="#888" />
        <path d="M32 28h22l4 24v5H29v-5Z" fill="#b5b5b5" stroke="#777" />
        <circle cx="43" cy="42" r="8" fill="#ccc" stroke="#888" />
      </Art>
    ),
  },
  {
    name: "Contacts",
    art: (
      <Art>
        <path d="M52 8h5v10h-5zM52 20h5v10h-5zM52 32h5v12h-5z" fill="#666" />
        <rect width="54" height="54" rx="12" fill="#707070" />
        <circle cx="27" cy="27" r="17" stroke="#505050" strokeWidth="2" />
        <circle cx="27" cy="24" r="6" fill="#555" />
        <path d="M15 39q2-7 12-7t12 7q-12 9-24 0Z" fill="#555" />
      </Art>
    ),
  },
  {
    name: "Reminders",
    art: (
      <Tile className="bg-[#f5f5f5]">
        <Art>
          {[13, 27, 41].map((y) => (
            <g key={y}>
              <circle cx="11" cy={y} r="5" stroke="#777" />
              <circle cx="11" cy={y} r="3" fill="#444" />
              <path d={`M20 ${y}h28`} stroke="#aaa" strokeWidth="2" />
            </g>
          ))}
        </Art>
      </Tile>
    ),
  },
  {
    name: "Notes",
    art: (
      <Tile className="bg-[#efefef]">
        <Art>
          <path d="M0 0h54v14H0z" fill="#a5a5a5" />
          <path d="M0 16h54" stroke="#aaa" strokeDasharray="1 2" />
          <path d="M0 28h54M0 41h54" stroke="#ccc" />
        </Art>
      </Tile>
    ),
  },
  {
    name: "TV",
    badge: "1",
    art: (
      <Tile className="bg-[#111] text-white">
        <FaApple className="size-[18px]" />
        <span className="text-[22px] leading-6 font-medium">tv</span>
      </Tile>
    ),
  },
  {
    name: "Missing app",
    art: (
      <Art>
        <path d="M12 17Q13 3 27 3t15 13q0 8-8 13-6 4-6 12" stroke="#b2b2b2" strokeWidth="4" />
        <path d="M25 46h6v6h-6z" fill="#999" />
      </Art>
    ),
  },
  {
    name: "Music",
    art: (
      <Tile className="bg-[#6b6b6b]">
        <Art>
          <path d="M20 40V16l18-5v25" stroke="#fff" strokeWidth="4" />
          <path d="M18 13l22-5v9l-22 5Z" fill="#fff" />
          <ellipse cx="16" cy="40" rx="6" ry="5" fill="#fff" />
          <ellipse cx="34" cy="36" rx="6" ry="5" fill="#fff" />
        </Art>
      </Tile>
    ),
  },
  {
    name: "Podcasts",
    art: (
      <Tile className="bg-[#737373]">
        <Art>
          <path d="M19 43a18 18 0 1 1 16 0M21 35a11 11 0 1 1 12 0" stroke="#fff" strokeWidth="2" />
          <circle cx="27" cy="24" r="4" fill="#fff" />
          <path d="M22 33q5-4 10 0l-2 13q-3 3-6 0Z" fill="#fff" />
        </Art>
      </Tile>
    ),
  },
  {
    name: "App Store",
    badge: "1",
    art: (
      <Tile className="bg-[#969696]">
        <Art>
          <path d="M24 12l16 29M30 12 16 36M14 41l-1 1M10 34h24M38 34h6" stroke="#fff" strokeWidth="4" strokeLinecap="round" />
        </Art>
      </Tile>
    ),
  },
  {
    name: "System Preferences",
    badge: "2",
    art: (
      <Tile className="bg-[#b0b0b0]">
        <Art>
          <circle cx="27" cy="27" r="22" fill="#2a2a2a" stroke="#222" strokeWidth="3" strokeDasharray="2 1" />
          <circle cx="27" cy="27" r="18" fill="#555" stroke="#aaa" strokeWidth="2" />
          <circle cx="27" cy="27" r="12" fill="#666" stroke="#222" strokeWidth="4" />
          <path d="M27 27h18M27 27l-9-15M27 27l-9 15" stroke="#bbb" strokeWidth="3" />
        </Art>
      </Tile>
    ),
  },
  {
    name: "Chrome",
    dot: true,
    art: (
      <Tile className="bg-[#f5f5f5]">
        <Art>
          <circle cx="27" cy="27" r="22" fill="#777" />
          <path d="M27 17h19a22 22 0 0 1-19 32l9-17Z" fill="#b5b5b5" />
          <path d="M8 16l11 17 8 16A22 22 0 0 1 8 16Z" fill="#888" />
          <circle cx="27" cy="27" r="10" fill="#888" stroke="#fff" strokeWidth="2" />
        </Art>
      </Tile>
    ),
  },
  {
    name: "Outlook",
    dot: true,
    badge: "1",
    art: (
      <span className="relative flex h-[54px] w-[60px]">
        <svg viewBox="0 0 60 54" className="h-[54px] w-[60px]" aria-hidden="true">
          <path d="M17 2h38v30H17z" fill="#777" />
          <path d="M31 8h24v20H31z" fill="#aaa" />
          <path d="M14 30h45v23H14z" fill="#999" />
          <path d="M59 29v24L30 38Z" fill="#bbb" />
          <rect y="13" width="30" height="30" rx="2" fill="#666" />
        </svg>
        <span className="absolute top-3 left-0 w-[30px] text-center text-2xl leading-8 font-bold text-white">O</span>
      </span>
    ),
  },
  {
    name: "Opera",
    art: (
      <Art>
        <circle cx="27" cy="27" r="30" fill="#464646" />
        <path d="M28 3q26-4 29 24-3 30-30 28 14-4 16-28-2-22-15-24Z" fill="#606060" />
        <ellipse cx="28" cy="27" rx="15" ry="24" fill="#3a3a3a" />
      </Art>
    ),
  },
];

const dockRunning: DockItem[] = [
  {
    name: "Activity",
    art: (
      <Tile className="bg-[#141414]">
        <Art>
          <path d="M8 0v54M18 0v54M28 0v54M38 0v54M47 0v54" stroke="#333" strokeWidth="2" />
          <path d="M0 32h7l3-3 4 4 5-9 4 10 4-10 4 8 5-12 4 8 3-6 3 7 3-6 5-5" stroke="#ccc" />
          <path d="M35 0v54" stroke="#999" strokeWidth="2" />
          <circle cx="35" cy="18" r="3" fill="#ccc" />
        </Art>
      </Tile>
    ),
  },
  {
    name: "WhatsApp",
    art: (
      <Svg box="0 0 60 60" className="size-[60px]">
        <path d="M30 0a29 29 0 1 1-14 55L0 60l5-16A29 29 0 0 1 30 0Z" fill="#f2f2f2" />
        <circle cx="30" cy="29" r="24" fill="#8a8a8a" />
        <path d="M17 18q4-5 7-1l3 6-3 5q3 6 9 9l4-4 8 4q1 4-4 7-9 3-17-6-10-10-7-20Z" fill="#fff" />
      </Svg>
    ),
  },
  {
    name: "ForkLift",
    art: (
      <span className="flex size-[54px] items-center justify-center rounded bg-[#9b9b9b]">
        <Forklift className="size-11" color="#333" />
      </span>
    ),
  },
  {
    name: "Terminal",
    art: (
      <Tile className="border-2 border-[#aaa] bg-black">
        <Art>
          <rect x="4" y="4" width="46" height="46" rx="8" fill="#262626" />
          <path d="M9 10l6 5-6 5M18 21h8" stroke="#fff" strokeWidth="2" />
        </Art>
      </Tile>
    ),
  },
  {
    name: "Telegram",
    art: (
      <Tile className="bg-[#f2f2f2]">
        <span className="flex size-[46px] items-center justify-center rounded-full bg-[#929292]">
          <FaTelegramPlane className="size-7 text-white" />
        </span>
      </Tile>
    ),
  },
  {
    name: "Sublime Text",
    art: (
      <Art>
        <rect x="-2" y="-2" width="58" height="58" rx="3" fill="#444" stroke="#3a3a3a" />
        <path d="M10 19 44 6v12L26 25l18 7v11L10 49V37l18-6-18-5Z" fill="#9a9a9a" />
      </Art>
    ),
  },
  { name: "Word", art: <OfficeIcon letter="W" /> },
  { name: "VLC", art: <VlcDock /> },
  {
    name: "Web",
    art: (
      <Art>
        <g stroke="#f5f5f5" strokeWidth="4">
          <path d="M15 3h25l12 16-3 22-22 11-21-11L2 19Z" />
          <path d="M15 3l-1-8M40 3l3-9M52 19l7-2M49 41l5 7M27 52v9M6 41l-7 6M2 19l-7-1" />
          <path d="M18 20l14-3 8 14-4 6M16 4l2 16-14 2M32 17l6-12M14 32l10 5 2 14M14 32l-7 8M14 32l2-6" strokeWidth="3" />
        </g>
      </Art>
    ),
  },
  {
    name: "Messenger",
    art: (
      <Tile className="bg-[#f5f5f5]">
        <FaFacebookMessenger className="size-11 text-[#6c6c6c]" />
      </Tile>
    ),
  },
  {
    name: "Alt",
    art: (
      <Tile className="bg-[#dcdcdc]">
        <Art>
          <circle cx="27" cy="27" r="10" stroke="#777" strokeWidth="9" />
          <path d="M27 17a10 10 0 0 1 10 10v14" stroke="#999" strokeWidth="9" />
          <rect x="21" y="21" width="12" height="12" rx="3" fill="#fff" />
        </Art>
      </Tile>
    ),
  },
  { name: "Excel", art: <OfficeIcon letter="X" dark /> },
  {
    name: "Document",
    art: (
      <Art>
        <path d="M4-3h30l16 16v44H4Z" fill="#ececec" />
        <path d="M34-3v16h16Z" fill="#bbb" stroke="#888" />
        <path d="M-5 58l5-8M-4 49l6-1-1 7" stroke="#111" strokeWidth="3" />
      </Art>
    ),
  },
].map((d) => ({ ...d, dot: true }));

const dockEnd: DockItem[] = [
  {
    name: "Documents",
    art: (
      <Art>
        <path d="M6-5h27l15 18v44H6Z" fill="#f2f2f2" />
        <path d="M30-5l18 20-15-4Z" fill="#ccc" stroke="#888" />
        <path d="M14 21h26v26H14z" fill="#a0a0a0" />
        <path d="M18 22h14v5H18z" fill="#222" />
        <circle cx="27" cy="36" r="8" fill="#c2c2c2" stroke="#999" />
      </Art>
    ),
  },
  {
    name: "Bin",
    art: (
      <Art>
        <path d="M4 5h46l-6 47q-4 5-17 5t-17-5Z" fill="#838383" />
        <path d="M9 10l6 42M45 10l-6 42" stroke="#9c9c9c" strokeWidth="3" />
        <path d="M20 16q14 8 4 30" stroke="#959595" strokeWidth="5" />
        <path d="M5 5l6-9 8-1 8 2 6-2 8 3 9 8-8 4-9 1-8-3-10 2Z" fill="#e4e4e4" />
        <path d="M9 4l6-4 5 6 7-7M28 7l5-7 6 4 5 3M22 0l3 8" stroke="#444" strokeWidth="2" />
      </Art>
    ),
  },
];

function DockSlot({ item }: { item: DockItem }) {
  return (
    <button aria-label={item.name} className="relative flex h-full flex-1 items-center justify-center pb-1.5">
      {item.art}
      {item.badge && (
        <span className="absolute top-2 right-[2px] flex size-6 items-center justify-center rounded-full bg-[#555] text-base text-[#eee]">
          {item.badge}
        </span>
      )}
      {item.dot && <span className="absolute bottom-1 left-1/2 size-2 -translate-x-1/2 rounded-full bg-[#bebebe]" />}
    </button>
  );
}

function Dock() {
  return (
    <nav
      aria-label="Dock"
      className="absolute right-[54px] bottom-[10px] left-[55px] flex h-[90px] items-center rounded-[24px] border-2 border-[#6a6a6a] bg-linear-to-r from-[#333] from-30% via-[#3f3f3f] via-70% to-[#696969] to-85% pr-1.5 pl-0.5"
    >
      {dockMain.map((d) => (
        <DockSlot key={d.name} item={d} />
      ))}
      <span className="mx-[15px] h-[66px] w-0.5 bg-[#777]" />
      {dockRunning.map((d) => (
        <DockSlot key={d.name} item={d} />
      ))}
      <span className="mx-[15px] h-[66px] w-0.5 bg-[#999]" />
      {dockEnd.map((d) => (
        <DockSlot key={d.name} item={d} />
      ))}
    </nav>
  );
}

/* ---------- windows furthest back ---------- */

function BackWindows() {
  return (
    <>
      <div className="absolute top-[49px] right-0 bottom-[2px] left-0 flex flex-col justify-end overflow-hidden rounded-[22px] border-2 border-[#5e5e5e] bg-[#1b1b1b]">
        <div className="flex h-[266px] items-end">
          <div className="flex h-[108px] flex-1 items-start overflow-hidden bg-[#141414] pl-[95px] text-[24px] leading-6 text-[#aaa]">
            <span className="mr-[18px] h-5 w-[22px] bg-[#aaa]" />
            <span className="-mt-1">performance.xls</span>
            <span className="mr-8 ml-auto h-10 w-8 bg-[#444]" />
            <span className="mr-[22px]">no matches</span>
            <FaArrowCircleUp className="mr-[30px] size-6 text-[#999]" />
            <FaArrowCircleDown className="mr-[245px] size-6 text-[#999]" />
          </div>
          <div className="flex h-full w-[604px] flex-col">
            <div className="flex h-[214px] items-end justify-end border-r-4 border-b-2 border-[#aaa] bg-[linear-gradient(to_right,#8a8a8a_0,#8a8a8a_80%,transparent_95%),linear-gradient(to_bottom,#555,#999_50%,#d2d2d2)] pr-4 text-[34px] leading-[48px] text-[#666]">
              <span className="font-['Noto_Sans',sans-serif]">ot</span>
            </div>
            <div className="flex-1 bg-[#222] pr-9 text-right text-2xl leading-[44px] text-[#ddd]">%</div>
          </div>
        </div>
      </div>
      <div className="absolute top-[50px] right-[10px] left-[10px] h-10 rounded-t-[22px] border-2 border-[#555] bg-[#242424]" />
    </>
  );
}

export default function App() {
  return (
    <div className="relative flex h-screen w-full flex-col overflow-hidden bg-[#4a4a4a] font-['Inter',sans-serif]">
      <BackWindows />
      <MenuBar />
      <MailWindow />
      <main className="relative mt-2.5 -mr-1 mb-[268px] ml-[10px] flex min-h-0 flex-1 flex-col overflow-hidden rounded-[20px] border-t-2 border-[#5e5e5e] bg-[#212121] shadow-[0_0_0_1px_#000,0_20px_60px_rgba(0,0,0,0.5)]">
        <TabStrip />
        <Toolbar />
        <BookmarkBar />
        <EnquiryForm />
      </main>
      <OptionMenu />
      <Dock />
    </div>
  );
}
